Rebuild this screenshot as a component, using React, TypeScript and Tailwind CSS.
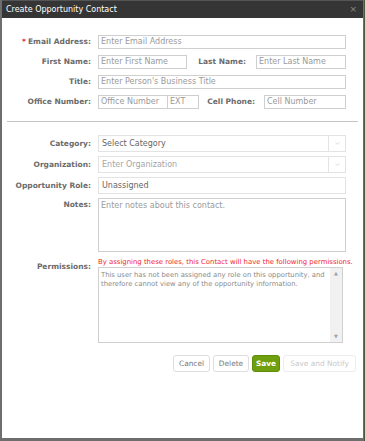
import { ChevronDown } from "lucide-react";

const Label = ({ children, req }: { children: React.ReactNode; req?: boolean }) => (
  <div className="w-[96px] shrink-0 pr-[7px] text-right text-[7.5px] font-bold text-[#6b6b6b]">
    {req && <span className="text-[#e0262a] mr-[2px]">*</span>}
    {children}
  </div>
);

const Input = ({ ph, className = "" }: { ph: string; className?: string }) => (
  <div
    className={`h-[14px] border border-[#cfcfcf] bg-white px-[2px] text-[8px] leading-[12px] text-[#9a9a9a] ${className}`}
  >
    {ph}
  </div>
);

const Select = ({ ph, dim }: { ph: string; dim?: boolean }) => (
  <div className="flex h-[17px] w-[248px] border border-[#e3e3e3] bg-white">
    <div className={`flex-1 px-[3px] text-[8px] leading-[15px] ${dim ? "text-[#a5a5a5]" : "text-[#666]"}`}>{ph}</div>
    <div className="flex w-[17px] items-center justify-center border-l border-[#e3e3e3]">
      <ChevronDown size={7} strokeWidth={1.5} className="text-[#b0b0b0]" />
    </div>
  </div>
);

const Btn = ({ children, className = "" }: { children: React.ReactNode; className?: string }) => (
  <div
    className={`flex h-[17px] items-center justify-center rounded-[3px] border text-[7.4px] ${className}`}
  >
    {children}
  </div>
);

export default function App() {
  return (
    <div className="h-[441px] w-[365px] overflow-hidden bg-[#4b5a3a] font-['DejaVu_Sans',sans-serif]">
      <div className="flex h-[441px] w-[364px] flex-col border-b-[3px] border-l-2 border-r border-[#6e6e6e] bg-white">
        <div className="flex h-[18px] shrink-0 items-center justify-between border-t border-[#555] bg-[#353535] pl-[4px] pr-[6px]">
          <span className="text-[8px] text-white">Create Opportunity Contact</span>
          <span className="text-[9px] leading-none text-[#8a8a8a]">×</span>
        </div>

        <div className="flex flex-col gap-[6px] pt-[17px]">
          <div className="flex items-center">
            <Label req>Email Address:</Label>
            <Input ph="Enter Email Address" className="w-[248px]" />
          </div>
          <div className="flex items-center">
            <Label>First Name:</Label>
            <Input ph="Enter First Name" className="w-[89px]" />
            <div className="w-[69px] pr-[10px] text-right text-[7.5px] font-bold text-[#6b6b6b]">Last Name:</div>
            <Input ph="Enter Last Name" className="w-[90px]" />
          </div>
          <div className="flex items-center">
            <Label>Title:</Label>
            <Input ph="Enter Person's Business Title" className="w-[248px]" />
          </div>
          <div className="flex items-center">
            <Label>Office Number:</Label>
            <Input ph="Office Number" className="w-[70px]" />
            <Input ph="EXT" className="w-[31px] border-l-0" />
            <div className="w-[65px] pr-[9px] text-right text-[7.5px] font-bold text-[#6b6b6b]">Cell Phone:</div>
            <Input ph="Cell Number" className="w-[82px]" />
          </div>
        </div>

        <div className="mx-[5px] mt-[12px] h-px bg-[#c4c4c4]" />

        <div className="flex flex-col gap-[4px] pt-[13px]">
          <div className="flex items-center">
            <Label>Category:</Label>
            <Select ph="Select Category" />
          </div>
          <div className="flex items-center">
            <Label>Organization:</Label>
            <Select ph="Enter Organization" dim />
          </div>
          <div className="flex items-center">
            <Label>Opportunity Role:</Label>
            <div className="h-[17px] w-[248px] border border-[#e3e3e3] px-[3px] text-[8px] leading-[15px] text-[#666]">
              Unassigned
            </div>
          </div>
          <div className="flex items-start">
            <Label>
              <span className="leading-[14px]">Notes:</span>
            </Label>
            <div className="h-[54px] w-[248px] border border-[#cfcfcf] px-[2px] pt-[1px] text-[8px] text-[#9a9a9a]">
              Enter notes about this contact.
            </div>
          </div>
        </div>

        <div className="mt-[5px] flex items-start">
          <div className="w-[96px] shrink-0 pr-[7px] pt-[4px] text-right text-[7.5px] font-bold text-[#6b6b6b]">
            Permissions:
          </div>
          <div className="flex flex-col">
            <div className="h-[10px] whitespace-nowrap text-[6.9px] leading-[10px] text-[#f0282c]">
              By assigning these roles, this Contact will have the following permissions.
            </div>
            <div className="flex h-[76px] w-[245px] border border-[#cfcfcf]">
              <div className="flex-1 px-[2px] pt-[3px] text-[6.8px] leading-[9px] text-[#8a8a8a]">
                This user has not been assigned any role on this opportunity, and therefore cannot view any of the opportunity information.
              </div>
              <div className="flex w-[12px] flex-col items-center justify-between bg-[#f1f1f1] py-[3px] text-[5px] leading-none text-[#a3a3a3]">
                <span>▲</span>
                <span>▼</span>
              </div>
            </div>
          </div>
        </div>

        <div className="mt-[12px] flex justify-end gap-[3px] pr-[7px]">
          <Btn className="w-[37px] border-[#dedede] text-[#777]">Cancel</Btn>
          <Btn className="w-[36px] border-[#dedede] text-[#777]">Delete</Btn>
          <Btn className="w-[28px] border-[#5f8f08] bg-[#6f9e0e] font-bold text-white">Save</Btn>
          <Btn className="w-[73px] border-[#ececec] text-[#c9c9c9]">Save and Notify</Btn>
        </div>
      </div>
    </div>
  );
}
